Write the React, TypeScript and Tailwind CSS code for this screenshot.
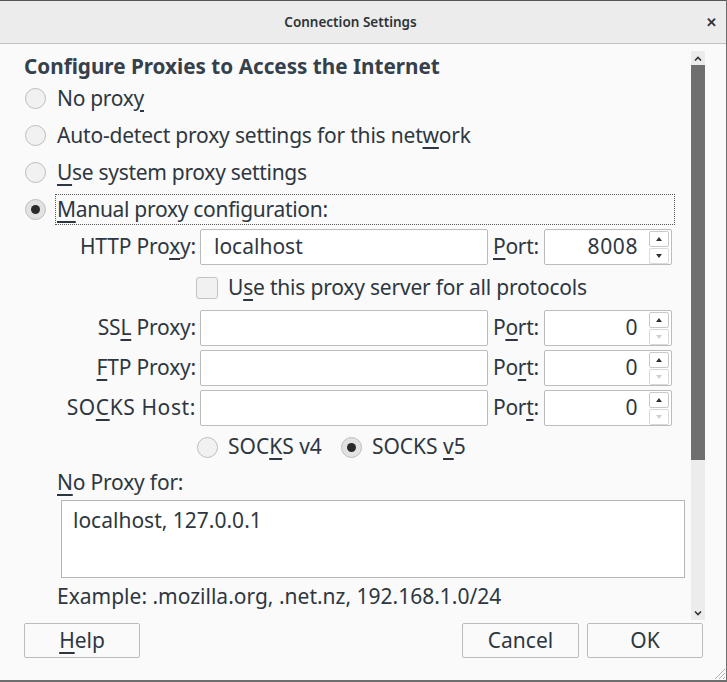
import React from "react";

const font = { fontFamily: '"Noto Sans", "Open Sans", sans-serif' };

function Radio({ checked }: { checked?: boolean }) {
  return (
    <span
      className={
        "flex h-[21px] w-[21px] shrink-0 items-center justify-center rounded-full border border-[#bdbdbd] " +
        (checked ? "bg-[#e2e2e2]" : "bg-[#f1f1f1]")
      }
    >
      {checked && <span className="h-[9px] w-[9px] rounded-full bg-[#2a2a2a]" />}
    </span>
  );
}

function Spinner({ downDisabled }: { downDisabled?: boolean }) {
  return (
    <div className="flex flex-col gap-[1px]">
      <div className="flex h-[16px] w-[20px] items-center justify-center rounded-[2px] border border-[#c8c8c8] bg-white">
        <svg width="6" height="4" viewBox="0 0 6 4">
          <path d="M0 4 L3 0 L6 4 Z" fill="#333" />
        </svg>
      </div>
      <div className="flex h-[16px] w-[20px] items-center justify-center rounded-[2px] border border-[#dadada] bg-white">
        <svg width="6" height="4" viewBox="0 0 6 4">
          <path d="M0 0 L3 4 L6 0 Z" fill={downDisabled ? "#cfcfcf" : "#333"} />
        </svg>
      </div>
    </div>
  );
}

function ProxyRow({
  label,
  value,
  port,
  portLabel,
  downDisabled,
  labelClass,
}: {
  label: React.ReactNode;
  value: string;
  port: string;
  portLabel: React.ReactNode;
  downDisabled?: boolean;
  labelClass?: string;
}) {
  return (
    <div className="flex h-[36px] shrink-0 items-center">
      <div className={"w-[144px] pr-[4px] text-right " + (labelClass ?? "tracking-[-0.2px]")}>{label}</div>
      <div className="flex h-[36px] w-[288px] items-center rounded-[2px] border border-[#bcbcbc] bg-white pl-[13px]">
        {value}
      </div>
      <div className="w-[56px] pl-[5px] tracking-[-0.3px]">{portLabel}</div>
      <div className="flex h-[36px] w-[128px] items-center justify-end gap-[11px] rounded-[2px] border border-[#bcbcbc] bg-white pr-[2px]">
        <span className="tracking-[0.6px]">{port}</span>
        <Spinner downDisabled={downDisabled} />
      </div>
    </div>
  );
}

const U = ({ children }: { children: React.ReactNode }) => (
  <u className="underline-offset-[4px]">{children}</u>
);

export default function App() {
  return (
    <div
      className="relative flex h-[682px] w-[727px] flex-col overflow-hidden border-r border-b-2 border-[#6e6e6e] bg-[#fafafa] text-[21px] text-[#2e3740]"
      style={font}
    >
      {/* title bar */}
      <div className="relative flex h-[44px] shrink-0 items-center justify-center border-t border-b border-t-[#555] border-b-[#c2c2c2] bg-[#ececec] pr-[25px]">
        <span className="text-[13.5px] font-semibold text-[#2e3436]">Connection Settings</span>
        <span className="absolute right-[9px] top-[12px] text-[13px] font-bold text-[#2e3436]">✕</span>
      </div>

      {/* body */}
      <div className="flex h-[576px] shrink-0">
        <div className="flex flex-1 flex-col overflow-hidden pl-[24px] pt-[9px]">
          <div className="flex h-[27px] shrink-0 items-center text-[20.7px] font-bold text-[#35404b]">
            Configure Proxies to Access the Internet
          </div>
          <div className="flex h-[37px] shrink-0 items-center gap-[11px] pl-[1px] tracking-[-0.3px]">
            <Radio />
            <span>
              No prox<U>y</U>
            </span>
          </div>
          <div className="flex h-[37px] shrink-0 items-center gap-[11px] pl-[1px] tracking-[-0.2px]">
            <Radio />
            <span>
              Auto-detect proxy settings for this net<U>w</U>ork
            </span>
          </div>
          <div className="flex h-[37px] shrink-0 items-center gap-[11px] pl-[1px] tracking-[-0.3px]">
            <Radio />
            <span>
              <U>U</U>se system proxy settings
            </span>
          </div>
          <div className="flex h-[37px] shrink-0 items-center gap-[9px] pl-[1px] tracking-[-0.3px]">
            <Radio checked />
            <span className="flex h-[31px] w-[620px] items-center border border-dotted border-[#555] pl-[1px]">
              <span>
                <U>M</U>anual proxy configuration:
              </span>
            </span>
          </div>

          {/* manual block */}
          <div className="flex shrink-0 flex-col pl-[32px]">
            <div className="mt-[1px]">
              <ProxyRow
                label={
                  <>
                    HTTP Pro<U>x</U>y:
                  </>
                }
                value="localhost"
                port="8008"
                portLabel={
                  <>
                    <U>P</U>ort:
                  </>
                }
              />
            </div>
            <div className="flex h-[45px] shrink-0 items-center gap-[10px] pl-[140px] tracking-[-0.2px]">
              <span className="h-[22px] w-[22px] rounded-[3px] border border-[#c4c4c4] bg-[#f1f1f1]" />
              <span>
                U<U>s</U>e this proxy server for all protocols
              </span>
            </div>
            <div className="flex flex-col gap-[4px]">
              <ProxyRow
                label={
                  <>
                    SS<U>L</U> Proxy:
                  </>
                }
                value=""
                port="0"
                downDisabled
                portLabel={
                  <>
                    P<U>o</U>rt:
                  </>
                }
              />
              <ProxyRow
                label={
                  <>
                    <U>F</U>TP Proxy:
                  </>
                }
                value=""
                port="0"
                downDisabled
                portLabel={
                  <>
                    Po<U>r</U>t:
                  </>
                }
              />
              <ProxyRow
                labelClass="tracking-[0.6px]"
                label={
                  <>
                    SO<U>C</U>KS Host:
                  </>
                }
                value=""
                port="0"
                downDisabled
                portLabel={
                  <>
                    Por<U>t</U>:
                  </>
                }
              />
            </div>
            <div className="flex h-[42px] shrink-0 items-center pl-[141px]">
              <Radio />
              <span className="ml-[10px]">
                SOC<U>K</U>S v4
              </span>
              <span className="ml-[19px]">
                <Radio checked />
              </span>
              <span className="ml-[10px]">
                SOCKS <U>v</U>5
              </span>
            </div>
          </div>

          <div className="flex h-[30px] shrink-0 items-center pl-[33px] tracking-[-0.2px]">
            <span>
              <U>N</U>o Proxy for:
            </span>
          </div>
          <div className="ml-[37px] mt-[2px] h-[78px] w-[624px] shrink-0 border border-[#b5b5b5] bg-white px-[11px] pt-[4px]">
            localhost, 127.0.0.1
          </div>
          <div className="flex h-[38px] shrink-0 items-center pl-[33px]">
            Example: .mozilla.org, .net.nz, 192.168.1.0/24
          </div>
          <div className="mt-[4px] flex shrink-0 pl-[1px]">
            <Radio />
          </div>
        </div>

        {/* scrollbar */}
        <div className="mr-[21px] mt-[7px] flex w-[14px] shrink-0 flex-col">
          <div className="flex h-[14px] shrink-0 items-center justify-center bg-[#ebebeb]">
            <svg width="8" height="5" viewBox="0 0 8 5">
              <path d="M1 4.5 L4 1.5 L7 4.5" stroke="#333" strokeWidth="1.6" fill="none" />
            </svg>
          </div>
          <div className="h-[395px] shrink-0 bg-[#6f6f6f]" />
          <div className="flex flex-1 flex-col justify-end bg-[#ececec] pb-[4px]">
            <div className="flex justify-center">
              <svg width="8" height="5" viewBox="0 0 8 5">
                <path d="M1 0.5 L4 3.5 L7 0.5" stroke="#333" strokeWidth="1.6" fill="none" />
              </svg>
            </div>
          </div>
        </div>
      </div>

      {/* buttons */}
      <div className="flex items-start justify-between pl-[24px] pr-[23px] pt-[3px]">
        <button className="flex h-[35px] w-[116px] items-center justify-center rounded-[2px] border border-[#bcbcbc] bg-[#fafafa]">
          <span>
            <U>H</U>elp
          </span>
        </button>
        <div className="flex gap-[8px]">
          <button className="flex h-[35px] w-[117px] items-center justify-center rounded-[2px] border border-[#bcbcbc] bg-[#fafafa]">
            Cancel
          </button>
          <button className="flex h-[35px] w-[116px] items-center justify-center rounded-[2px] border border-[#bcbcbc] bg-[#fafafa]">
            OK
          </button>
        </div>
      </div>

      {/* resize grip */}
      <svg className="absolute bottom-[0px] right-[0px]" width="14" height="14" viewBox="0 0 14 14">
        <path d="M13 3 L3 13 M13 7 L7 13 M13 11 L11 13" stroke="#b0b0b0" strokeWidth="1" />
      </svg>
    </div>
  );
}
